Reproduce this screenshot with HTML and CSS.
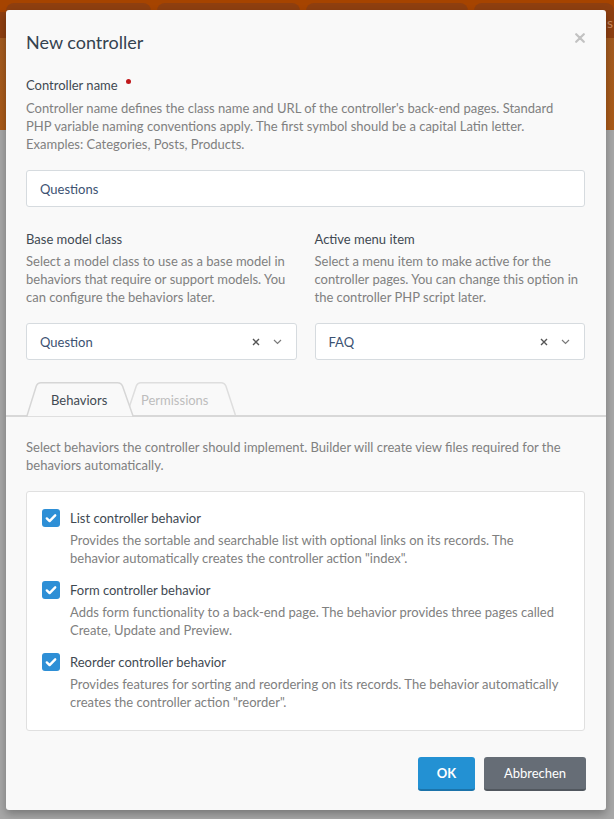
FILE: index.html
```html
<!DOCTYPE html>
<html lang="en">
<head>
<meta charset="utf-8">
<title>New controller</title>
<link rel="stylesheet" href="styles.css">
</head>
<body>
<div class="page">
  <div class="topbar">
    <div class="nav-tab t1"></div>
    <div class="nav-tab t2"></div>
    <div class="nav-tab t3"></div>
    <div class="nav-tab t4"></div>
    <span class="nav-text">s</span>
  </div>
  <div class="subbar"></div>
  <div class="content"></div>
</div>

<div class="modal">
  <div class="modal-header">
    <h1 class="modal-title">New controller</h1>
    <button class="close" type="button" aria-label="Close">
      <svg width="10" height="10" viewBox="0 0 10 10"><path d="M1.2 1.2 L8.8 8.8 M8.8 1.2 L1.2 8.8" stroke="#c2c2c2" stroke-width="2.2" stroke-linecap="round"/></svg>
    </button>
  </div>

  <div class="modal-body">
    <div class="field field-first">
      <label class="label">Controller name<span class="req"></span></label>
      <p class="help help-first">Controller name defines the class name and URL of the controller's back-end pages. Standard<br>PHP variable naming conventions apply. The first symbol should be a capital Latin letter.<br>Examples: Categories, Posts, Products.</p>
      <div class="input">Questions</div>
    </div>

    <div class="cols">
      <div class="field">
        <label class="label">Base model class</label>
        <p class="help">Select a model class to use as a base model in<br>behaviors that require or support models. You<br>can configure the behaviors later.</p>
        <div class="select">
          <span class="select-value">Question</span>
          <svg class="clear" width="8" height="8" viewBox="0 0 8 8"><path d="M1 1 L7 7 M7 1 L1 7" stroke="#555" stroke-width="1.4"/></svg>
          <svg class="chev" width="9" height="6" viewBox="0 0 9 6"><path d="M1 1 L4.5 4.5 L8 1" fill="none" stroke="#7a7a7a" stroke-width="1.2"/></svg>
        </div>
      </div>
      <div class="field">
        <label class="label">Active menu item</label>
        <p class="help">Select a menu item to make active for the<br>controller pages. You can change this option in<br>the controller PHP script later.</p>
        <div class="select">
          <span class="select-value">FAQ</span>
          <svg class="clear" width="8" height="8" viewBox="0 0 8 8"><path d="M1 1 L7 7 M7 1 L1 7" stroke="#555" stroke-width="1.4"/></svg>
          <svg class="chev" width="9" height="6" viewBox="0 0 9 6"><path d="M1 1 L4.5 4.5 L8 1" fill="none" stroke="#7a7a7a" stroke-width="1.2"/></svg>
        </div>
      </div>
    </div>
  </div>

  <div class="tabs">
    <div class="tab tab-active">
      <svg class="tab-shape" width="108" height="35" viewBox="0 0 108 35"><path d="M0.6 35 L10.2 4.2 Q11.4 0.75 15 0.75 L91.5 0.75 Q95.2 0.75 96.6 4.2 L107.4 35 Z" fill="#f9f9f9" stroke="#d6d6d6" stroke-width="1.5"/></svg>
      <span class="tab-text">Behaviors</span>
    </div>
    <div class="tab tab-inactive">
      <svg class="tab-shape" width="110" height="35" viewBox="0 0 110 35"><path d="M0.6 33 L10.2 4.2 Q11.4 0.75 15 0.75 L95 0.75 Q98.6 0.75 100 4.2 L109.4 33" fill="#f9f9f9" stroke="#dedede" stroke-width="1.5"/></svg>
      <span class="tab-text">Permissions</span>
    </div>
  </div>

  <div class="tab-pane">
    <p class="help">Select behaviors the controller should implement. Builder will create view files required for the<br>behaviors automatically.</p>
    <div class="behaviors">
      <div class="behavior">
        <span class="checkbox"><svg width="18" height="18" viewBox="0 0 18 18"><path d="M4.8 9.4 L7.6 12.1 L13.2 6.3" fill="none" stroke="#fff" stroke-width="2.4" stroke-linecap="round" stroke-linejoin="round"/></svg></span>
        <div class="behavior-text">
          <div class="behavior-title">List controller behavior</div>
          <p class="help">Provides the sortable and searchable list with optional links on its records. The<br>behavior automatically creates the controller action "index".</p>
        </div>
      </div>
      <div class="behavior">
        <span class="checkbox"><svg width="18" height="18" viewBox="0 0 18 18"><path d="M4.8 9.4 L7.6 12.1 L13.2 6.3" fill="none" stroke="#fff" stroke-width="2.4" stroke-linecap="round" stroke-linejoin="round"/></svg></span>
        <div class="behavior-text">
          <div class="behavior-title">Form controller behavior</div>
          <p class="help">Adds form functionality to a back-end page. The behavior provides three pages called<br>Create, Update and Preview.</p>
        </div>
      </div>
      <div class="behavior">
        <span class="checkbox"><svg width="18" height="18" viewBox="0 0 18 18"><path d="M4.8 9.4 L7.6 12.1 L13.2 6.3" fill="none" stroke="#fff" stroke-width="2.4" stroke-linecap="round" stroke-linejoin="round"/></svg></span>
        <div class="behavior-text">
          <div class="behavior-title">Reorder controller behavior</div>
          <p class="help">Provides features for sorting and reordering on its records. The behavior automatically<br>creates the controller action "reorder".</p>
        </div>
      </div>
    </div>
  </div>

  <div class="modal-footer">
    <button class="btn btn-primary" type="button">OK</button>
    <button class="btn btn-default" type="button">Abbrechen</button>
  </div>
</div>
</body>
</html>
```

FILE: styles.css
```css
* { box-sizing: border-box; }

html, body {
  margin: 0;
  padding: 0;
  width: 614px;
  height: 819px;
  overflow: hidden;
  font-family: Lato, "Open Sans", sans-serif;
}

.page {
  width: 614px;
  height: 819px;
  display: flex;
  flex-direction: column;
  background: #a6a6a6;
}

.topbar {
  height: 38px;
  background: linear-gradient(#a64400 0, #a64400 12px, #8e3f10 12px, #8e3f10 100%);
  display: flex;
  gap: 6px;
  padding: 3px 0 0 6px;
  position: relative;
}

.nav-tab {
  height: 9px;
  background: #8e3f10;
  border-radius: 8px 8px 0 0;
}
.t1 { width: 145px; }
.t2 { width: 143px; }
.t3 { width: 162px; }
.t4 { width: 140px; }

.nav-text {
  position: absolute;
  right: 1px;
  top: 14px;
  color: #c98a60;
  font-size: 14px;
}

.subbar {
  height: 92px;
  background: linear-gradient(#a35b20, #aa5a18);
}

.content {
  flex: 1;
  background: #a7a7a7;
}

.modal {
  position: absolute;
  left: 6px;
  top: 10px;
  width: 600px;
  height: 800px;
  background: #f9f9f9;
  border-radius: 3px;
  box-shadow: 0 4px 8px rgba(0, 0, 0, 0.28);
  padding: 20px 0 20px 0;
  display: flex;
  flex-direction: column;
}

.modal-header {
  padding: 0 21px 0 20px;
}

.modal-title {
  margin: 0;
  font-size: 18px;
  line-height: 24px;
  font-weight: normal;
  color: #34424f;
}

.close {
  position: absolute;
  top: 23px;
  right: 21px;
  width: 10px;
  height: 10px;
  padding: 0;
  border: 0;
  background: none;
  display: flex;
}

.modal-body {
  padding: 0 21px 0 20px;
}

.field-first { margin-top: 22px; }

.label {
  display: block;
  font-size: 13px;
  line-height: 18px;
  color: #3f4952;
}

.req {
  display: inline-block;
  width: 5px;
  height: 5px;
  border-radius: 50%;
  background: #c0181b;
  margin-left: 8px;
  vertical-align: 6px;
}

.help {
  margin: 4px 0 0 0;
  font-size: 13px;
  line-height: 18px;
  color: #808080;
  white-space: nowrap;
}
.help-first { margin-top: 5px; }

.input, .select {
  margin-top: 17px;
  height: 37px;
  background: #fff;
  border: 1px solid #d6dbdf;
  border-radius: 3px;
  padding: 0 13px;
  display: flex;
  align-items: center;
  font-size: 13px;
  color: #3c5272;
}

.cols {
  margin-top: 23px;
  display: grid;
  grid-template-columns: 1fr 1fr;
  column-gap: 18px;
}

.select { padding-right: 14px; }
.select-value { flex: 1; }
.clear { margin-right: 13px; }

.tabs {
  margin-top: 22px;
  height: 35px;
  border-bottom: 2px solid #d8d8d8;
  display: flex;
  align-items: flex-start;
  padding-left: 20px;
}

.tab {
  position: relative;
  height: 35px;
  margin-bottom: -2px;
  font-size: 13px;
  line-height: 18px;
  padding-top: 9px;
}
.tab-shape {
  position: absolute;
  left: 0;
  top: 0;
}
.tab-text { position: relative; }

.tab-active {
  width: 108px;
  z-index: 2;
  padding-left: 25px;
  color: #3f4952;
}
.tab-inactive {
  width: 110px;
  margin-left: -8px;
  z-index: 1;
  padding-left: 15px;
  color: #bdbdbd;
}

.tab-pane {
  padding: 0 21px 0 20px;
}
.tab-pane > .help { margin-top: 21px; }

.behaviors {
  margin-top: 17px;
  background: #fff;
  border: 1px solid #e0e0e0;
  border-radius: 3px;
  padding: 17px 15px 19px 15px;
  display: flex;
  flex-direction: column;
  gap: 14px;
}

.behavior {
  display: flex;
  gap: 10px;
  align-items: flex-start;
}

.checkbox {
  width: 18px;
  height: 18px;
  border-radius: 3px;
  background: #2e8fd6;
  display: flex;
  flex: none;
}

.behavior-title {
  font-size: 13px;
  line-height: 18px;
  color: #3f4952;
}

.modal-footer {
  margin-top: 26px;
  padding: 0 20px 0 20px;
  display: flex;
  justify-content: flex-end;
  gap: 9px;
}

.btn {
  height: 34px;
  border: 0;
  border-radius: 3px;
  font-family: Lato, "Open Sans", sans-serif;
  font-size: 13px;
  color: #fff;
  padding: 0;
}
.btn-primary {
  width: 57px;
  background: #2391d3;
  border-bottom: 2px solid #1b73aa;
  font-weight: bold;
}
.btn-default {
  width: 102px;
  background: #666d76;
  border-bottom: 2px solid #51575e;
  font-weight: normal;
}
```
